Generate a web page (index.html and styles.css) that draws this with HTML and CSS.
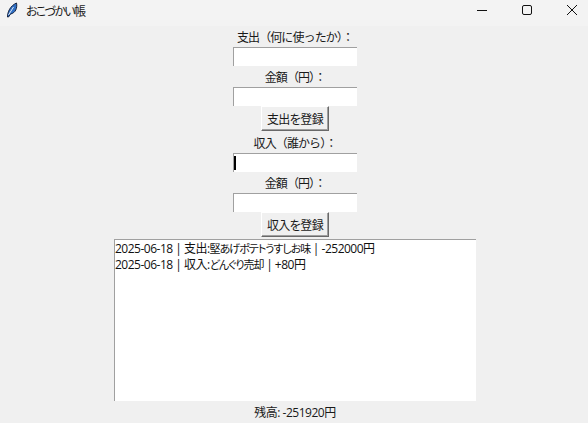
FILE: index.html
```html
<!DOCTYPE html>
<html lang="ja">

<head>
  <meta charset="UTF-8" />
  <meta name="viewport" content="width=device-width, initial-scale=1.0" />
  <title>おこづかい帳</title>
  <link rel="stylesheet" href="styles.css">
</head>

<body>

  <div class="titlebar">
    <svg class="appicon" width="12" height="16" viewBox="0 0 12 16">
      <path d="M1.5 15 C1.5 10 4 4 10.5 1 C11.5 6 9.5 11 4.5 12 L2.5 15 Z" fill="#2f6fc4" stroke="#14233f" stroke-width="1" />
      <path d="M2.5 13 L7.5 5" stroke="#dfe9f7" stroke-width="1" fill="none" />
    </svg>
    <span class="apptitle">おこづかい帳</span>
    <div class="winbuttons">
      <svg width="46" height="26" viewBox="0 0 46 26"><path d="M18 10.5 H28" stroke="#111" stroke-width="1" /></svg>
      <svg width="46" height="26" viewBox="0 0 46 26"><rect x="18.5" y="5.5" width="9" height="9" rx="1.5" fill="none" stroke="#111" stroke-width="1" /></svg>
      <svg width="46" height="26" viewBox="0 0 46 26"><path d="M18 5 L28 15 M28 5 L18 15" stroke="#111" stroke-width="1" /></svg>
    </div>
  </div>

  <div class="app">
    <label class="caption">支出（何に使ったか）：</label>
    <div class="entry"></div>
    <label class="caption">金額（円）：</label>
    <div class="entry"></div>
    <button class="btn">支出を登録</button>

    <label class="caption">収入（誰から）：</label>
    <div class="entry"><span class="cursor"></span></div>
    <label class="caption">金額（円）：</label>
    <div class="entry"></div>
    <button class="btn">収入を登録</button>

    <div class="history">
      <div>2025-06-18 | 支出:<span class="memo">堅あげポテトうすしお味</span> | -252000円</div>
      <div>2025-06-18 | 収入:<span class="memo">どんぐり売却</span> | +80円</div>
    </div>
    <div class="balance">残高: -251920円</div>
  </div>

</body>

</html>
```

FILE: styles.css
```css
* {
  box-sizing: border-box;
}

html,
body {
  margin: 0;
  height: 100%;
  overflow: hidden;
}

body {
  background-color: #f0f0f0;
  color: #1a1a1a;
  font-family: "Open Sans", "Noto Sans CJK JP", sans-serif;
  font-size: 12px;
  font-feature-settings: "palt";
  letter-spacing: -0.5px;
}

.titlebar {
  display: flex;
  align-items: center;
  height: 26px;
  padding-left: 6px;
  background-color: #f3f3f3;
}

.appicon {
  margin-bottom: 6px;
}

.apptitle {
  margin-left: 8px;
  margin-bottom: 5px;
  font-family: "Noto Sans CJK JP", sans-serif;
  letter-spacing: -1.7px;
}

.winbuttons {
  display: flex;
  margin-left: auto;
  margin-right: -7px;
}

.winbuttons svg {
  margin-left: -1px;
}

.app {
  display: flex;
  flex-direction: column;
  align-items: center;
  padding-left: 2px;
}

.caption {
  display: block;
  height: 21px;
  line-height: 21px;
  font-family: "Noto Sans CJK JP", sans-serif;
  font-feature-settings: normal;
  letter-spacing: -0.9px;
}

.entry {
  width: 124px;
  height: 19px;
  padding: 2px 0 0;
  background-color: white;
  border-top: 1px solid #a0a0a0;
  border-left: 1px solid #a0a0a0;
}

.cursor {
  display: block;
  width: 2px;
  height: 14px;
  background-color: black;
}

.btn {
  width: 68px;
  height: 25px;
  padding: 0;
  background-color: #f0f0f0;
  border: 1px solid;
  border-color: #fff #696969 #696969 #fff;
  box-shadow: inset -1px -1px 0 #a0a0a0;
  color: #1a1a1a;
  font-family: "Noto Sans CJK JP", sans-serif;
  font-size: 12px;
  font-feature-settings: "palt";
  letter-spacing: -0.6px;
}

.btn + .caption {
  margin-top: 1px;
}

.history {
  width: 362px;
  height: 162px;
  margin-top: 2px;
  padding: 1px 0 0;
  background-color: white;
  border-top: 1px solid #a0a0a0;
  border-left: 1px solid #a0a0a0;
  color: #111;
  line-height: 16px;
  white-space: nowrap;
}

.memo {
  font-size: 11px;
  letter-spacing: -1px;
}

.balance {
  height: 22px;
  line-height: 24px;
}
```
